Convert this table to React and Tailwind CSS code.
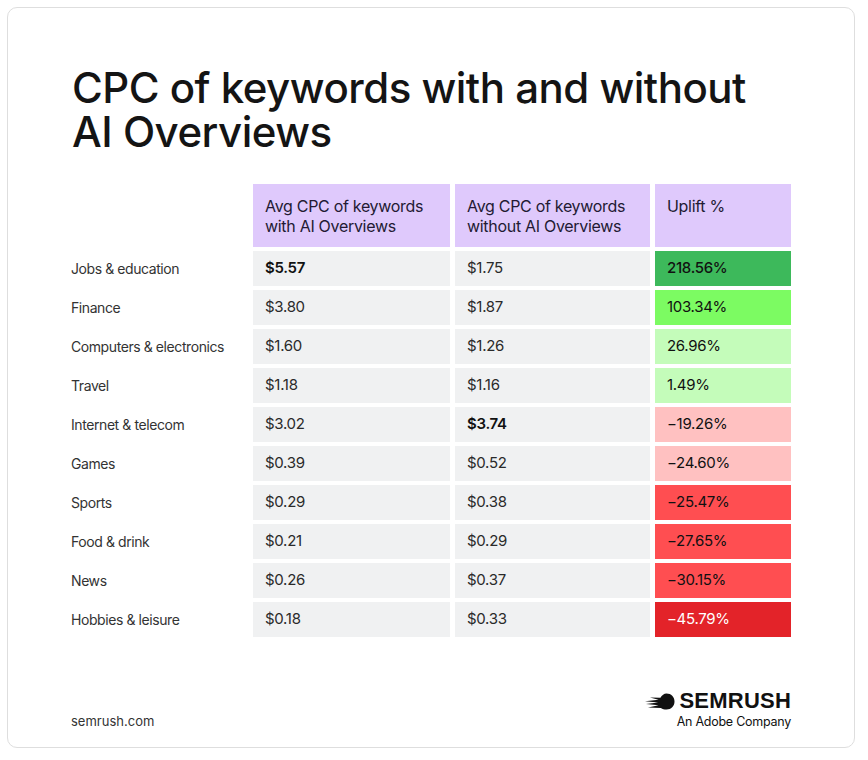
import React from 'react';

const rows = [
  { label: 'Jobs & education', withAi: '$5.57', withoutAi: '$1.75', uplift: '218.56%', bold: 'with', tone: 'bg-[#3db95b]', textTone: 'text-[#111]' },
  { label: 'Finance', withAi: '$3.80', withoutAi: '$1.87', uplift: '103.34%', tone: 'bg-[#7cfb62]', textTone: 'text-[#111]' },
  { label: 'Computers & electronics', withAi: '$1.60', withoutAi: '$1.26', uplift: '26.96%', tone: 'bg-[#c4fcba]', textTone: 'text-[#111]' },
  { label: 'Travel', withAi: '$1.18', withoutAi: '$1.16', uplift: '1.49%', tone: 'bg-[#c4fcba]', textTone: 'text-[#111]' },
  { label: 'Internet & telecom', withAi: '$3.02', withoutAi: '$3.74', uplift: '\u221219.26%', bold: 'without', tone: 'bg-[#ffc1c1]', textTone: 'text-[#111]' },
  { label: 'Games', withAi: '$0.39', withoutAi: '$0.52', uplift: '\u221224.60%', tone: 'bg-[#ffc1c1]', textTone: 'text-[#111]' },
  { label: 'Sports', withAi: '$0.29', withoutAi: '$0.38', uplift: '\u221225.47%', tone: 'bg-[#ff4e51]', textTone: 'text-[#111]' },
  { label: 'Food & drink', withAi: '$0.21', withoutAi: '$0.29', uplift: '\u221227.65%', tone: 'bg-[#ff4e51]', textTone: 'text-[#111]' },
  { label: 'News', withAi: '$0.26', withoutAi: '$0.37', uplift: '\u221230.15%', tone: 'bg-[#ff4e51]', textTone: 'text-[#111]' },
  { label: 'Hobbies & leisure', withAi: '$0.18', withoutAi: '$0.33', uplift: '\u221245.79%', tone: 'bg-[#e32329]', textTone: 'text-white' },
];

const SemrushMark = () => (
  <svg width="30" height="17" viewBox="0 0 30 17" className="shrink-0">
    <path
      fill="#111"
      d="M21.5 0.5c4.6 0 8 3.5 8 8s-3.4 8-8 8c-2.2 0-4-0.6-5.6-1.6L3 14.6l10.6-2.3-12.6-1.2 12.2-1.6L0 8.2l13.6-1.4L5 4.6l10.4 0.2C17 2.1 19 0.5 21.5 0.5z"
    />
  </svg>
);

export default function App() {
  return (
    <div className="w-[868px] h-[760px] bg-white pl-[7px] pt-[7px] pr-[13px] pb-[12px] font-['Inter','Liberation_Sans',sans-serif] text-[#222]">
      <div className="h-full rounded-[10px] border border-[#dedede] flex flex-col pl-[63px] pr-[63px] pt-[58px] pb-[18px]">
        {/* Title */}
        <h1 className="pl-[1px] text-[42px] leading-[44px] font-medium tracking-[-0.012em] text-[#141414]">
          CPC of keywords with and without
          <br />
          AI Overviews
        </h1>

        {/* Table */}
        <div className="mt-[30px] grid grid-cols-[177px_197px_195px_136px] gap-x-[5px] gap-y-[4px] text-[15px] tracking-[-0.02em]">
          <div />
          <div className="h-[63px] bg-[#dfc9fc] px-3 pt-[12px] text-[16px] leading-[20px] text-[#231a33]">
            Avg CPC of keywords with AI Overviews
          </div>
          <div className="h-[63px] bg-[#dfc9fc] px-3 pt-[12px] text-[16px] leading-[20px] text-[#231a33]">
            Avg CPC of keywords without AI Overviews
          </div>
          <div className="h-[63px] bg-[#dfc9fc] px-3 pt-[12px] text-[16px] leading-[20px] text-[#231a33]">
            Uplift %
          </div>

          {rows.map((row) => (
            <React.Fragment key={row.label}>
              <div className="h-[35px] flex items-center text-[14px] tracking-[-0.03em] text-[#333]">{row.label}</div>
              <div className={`h-[35px] flex items-center px-3 bg-[#f0f1f2] ${row.bold === 'with' ? 'font-semibold text-[#111]' : 'text-[#2a2a2a]'}`}>
                {row.withAi}
              </div>
              <div className={`h-[35px] flex items-center px-3 bg-[#f0f1f2] ${row.bold === 'without' ? 'font-semibold text-[#111]' : 'text-[#2a2a2a]'}`}>
                {row.withoutAi}
              </div>
              <div className={`h-[35px] flex items-center px-3 ${row.tone} ${row.textTone} ${row.label === 'Jobs & education' ? 'font-medium' : ''}`}>
                {row.uplift}
              </div>
            </React.Fragment>
          ))}
        </div>

        {/* Footer */}
        <div className="mt-auto flex items-end justify-between">
          <span className="text-[13px] text-[#333] leading-none pb-[1px]">semrush.com</span>
          <div className="flex flex-col items-end">
            <div className="flex items-center gap-[4px]">
              <SemrushMark />
              <span className="font-['Liberation_Sans',sans-serif] font-bold text-[22px] leading-[22px] tracking-[0.01em] text-[#111]">
                SEMRUSH
              </span>
            </div>
            <span className="mt-[2px] text-[12.5px] leading-[15px] tracking-[-0.02em] text-[#111]">
              An Adobe Company
            </span>
          </div>
        </div>
      </div>
    </div>
  );
}
